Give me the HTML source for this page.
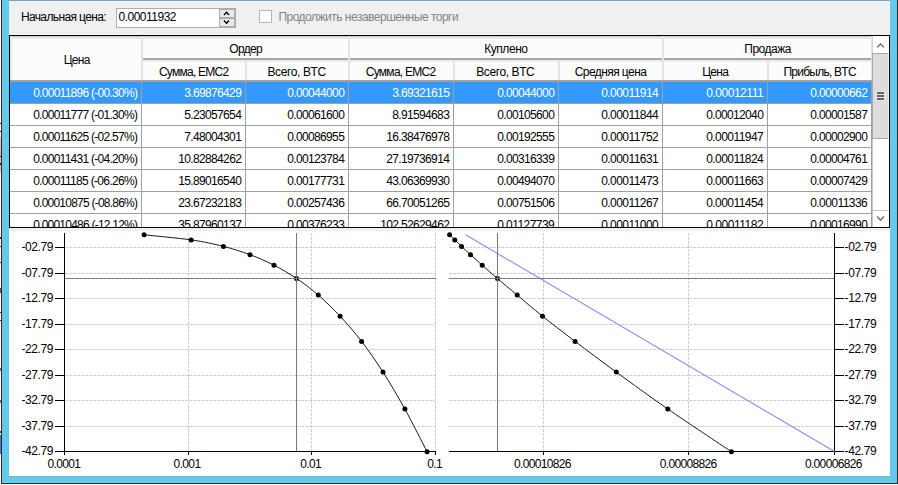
<!DOCTYPE html>
<html><head><meta charset="utf-8"><title>grid</title>
<style>
html,body{margin:0;padding:0;}
body{width:898px;height:485px;overflow:hidden;background:#fff;position:relative;font-family:"Liberation Sans",sans-serif;font-size:12px;color:#000;}
div,span{position:absolute;box-sizing:border-box;white-space:nowrap;}
.t{line-height:14px;height:14px;}
svg{position:absolute;left:0;top:0;}
svg text{font-family:"Liberation Sans",sans-serif;font-size:12px;fill:#000;}
</style></head><body>

<div style="left:0;top:0;width:898px;height:485px;background:#fbfbfb"></div>
<div style="left:1px;top:0;width:897px;height:484px;background:#2b2b2b"></div>
<div style="left:2px;top:0;width:895px;height:483px;background:#66c9e9"></div>
<div style="left:2px;top:482px;width:895px;height:1px;background:#6bd2f2"></div>
<div style="left:9px;top:476px;width:881px;height:1px;background:#62b8d8"></div>
<div style="left:0;top:137px;width:1px;height:35px;background:#e9bcbc"></div>
<div style="left:0;top:123px;width:1px;height:1px;background:#222"></div>
<div style="left:0;top:131px;width:1px;height:1px;background:#222"></div>
<div style="left:0;top:156px;width:1px;height:1px;background:#222"></div>
<div style="left:0;top:163px;width:1px;height:2px;background:#222"></div>
<div style="left:0;top:237px;width:1px;height:2px;background:#333"></div>
<div style="left:0;top:246px;width:1px;height:1px;background:#333"></div>
<div style="left:0;top:262px;width:1px;height:1px;background:#333"></div>
<div style="left:0;top:288px;width:1px;height:5px;background:#555"></div>
<div style="left:0;top:312px;width:1px;height:1px;background:#333"></div>
<div style="left:0;top:320px;width:1px;height:1px;background:#333"></div>
<div style="left:0;top:368px;width:1px;height:3px;background:#3a7bd5"></div>
<div style="left:0;top:400px;width:1px;height:3px;background:#3a7bd5"></div>
<div style="left:0;top:431px;width:1px;height:2px;background:#444"></div>
<div style="left:0;top:435px;width:1px;height:19px;background:#3a7bd5"></div>
<div style="left:9px;top:0;width:881px;height:1px;background:#72a5c5"></div>
<div style="left:9px;top:1px;width:881px;height:475px;background:#f0f0f0"></div>
<div style="left:9px;top:231px;width:881px;height:245px;background:#fff"></div>
<div style="left:116px;top:8px;width:120px;height:20px;background:#fff;border:1px solid #abadb3"></div>
<div style="left:219px;top:9px;width:16px;height:9px;background:#e9e9e9;border:1px solid #a9adb5"></div>
<div style="left:219px;top:18px;width:16px;height:9px;background:#e9e9e9;border:1px solid #a9adb5"></div>
<svg width="898" height="40" style="left:0;top:0"><path d="M224 15 L226.5 12.2 L229 15" fill="none" stroke="#000" stroke-width="1.3"/><path d="M224 20.5 L226.5 23.3 L229 20.5" fill="none" stroke="#000" stroke-width="1.3"/></svg>
<div style="left:259px;top:10px;width:13px;height:13px;background:#fff;border:1px solid #aeb6ba"></div>
<span class="t" style="left:20.90px;top:10px;letter-spacing:-0.616px;color:#000">Начальная цена:</span>
<span class="t" style="left:118.50px;top:10px;letter-spacing:-0.501px;color:#000">0.00011932</span>
<span class="t" style="left:278.40px;top:10px;letter-spacing:-0.497px;color:#838383">Продолжить незавершенные торги</span>
<div style="left:9px;top:35px;width:881px;height:193px;background:#000"></div>
<div style="left:10px;top:36px;width:879px;height:191px;background:#fff;overflow:hidden">
<div style="left:0;top:0;width:862px;height:46px;background:#fcfcfc"></div>
<div style="left:0;top:0;width:862px;height:3px;background:#e9e9e9"></div>
<div style="left:0;top:0;width:862px;height:1px;background:#c4c4c4"></div>
<div style="left:0;top:0;width:2px;height:45px;background:#e9e9e9"></div>
<div style="left:132px;top:22px;width:730px;height:2px;background:#a6a6a6"></div>
<div style="left:132px;top:24px;width:730px;height:2px;background:#ececec"></div>
<div style="left:131px;top:0px;width:2px;height:45px;background:#e4e4e4"></div>
<div style="left:235px;top:24px;width:2px;height:21px;background:#e4e4e4"></div>
<div style="left:338px;top:0px;width:2px;height:45px;background:#e4e4e4"></div>
<div style="left:443px;top:24px;width:2px;height:21px;background:#e4e4e4"></div>
<div style="left:548px;top:24px;width:2px;height:21px;background:#e4e4e4"></div>
<div style="left:652px;top:0px;width:2px;height:45px;background:#e4e4e4"></div>
<div style="left:757px;top:24px;width:2px;height:21px;background:#e4e4e4"></div>
<div style="left:861px;top:0px;width:2px;height:45px;background:#e4e4e4"></div>
<div style="left:0;top:44px;width:862px;height:2px;background:#a3a3a3"></div>
<div style="left:0;top:46px;width:861px;height:21px;background:#3399ff"></div>
<div style="left:0;top:67px;width:862px;height:1px;background:#a0a0a0"></div>
<div style="left:0;top:89px;width:862px;height:1px;background:#a0a0a0"></div>
<div style="left:0;top:111px;width:862px;height:1px;background:#a0a0a0"></div>
<div style="left:0;top:133px;width:862px;height:1px;background:#a0a0a0"></div>
<div style="left:0;top:155px;width:862px;height:1px;background:#a0a0a0"></div>
<div style="left:0;top:177px;width:862px;height:1px;background:#a0a0a0"></div>
<div style="left:0;top:199px;width:862px;height:1px;background:#a0a0a0"></div>
<div style="left:131px;top:46px;width:1px;height:145px;background:#a0a0a0"></div>
<div style="left:235px;top:46px;width:1px;height:145px;background:#a0a0a0"></div>
<div style="left:338px;top:46px;width:1px;height:145px;background:#a0a0a0"></div>
<div style="left:443px;top:46px;width:1px;height:145px;background:#a0a0a0"></div>
<div style="left:548px;top:46px;width:1px;height:145px;background:#a0a0a0"></div>
<div style="left:652px;top:46px;width:1px;height:145px;background:#a0a0a0"></div>
<div style="left:757px;top:46px;width:1px;height:145px;background:#a0a0a0"></div>
<div style="left:861px;top:46px;width:1px;height:145px;background:#a0a0a0"></div>
<span class="t" style="left:53.70px;top:17px;letter-spacing:-0.713px;color:#000">Цена</span>
<span class="t" style="left:219.30px;top:6px;letter-spacing:-0.696px;color:#000">Ордер</span>
<span class="t" style="left:474.20px;top:6px;letter-spacing:-0.438px;color:#000">Куплено</span>
<span class="t" style="left:734.30px;top:6px;letter-spacing:-0.498px;color:#000">Продажа</span>
<span class="t" style="left:148.90px;top:29px;letter-spacing:-0.738px;color:#000">Сумма, EMC2</span>
<span class="t" style="left:257.50px;top:29px;letter-spacing:-0.393px;color:#000">Всего, BTC</span>
<span class="t" style="left:355.80px;top:29px;letter-spacing:-0.738px;color:#000">Сумма, EMC2</span>
<span class="t" style="left:466.20px;top:29px;letter-spacing:-0.393px;color:#000">Всего, BTC</span>
<span class="t" style="left:564.70px;top:29px;letter-spacing:-0.568px;color:#000">Средняя цена</span>
<span class="t" style="left:692.20px;top:29px;letter-spacing:-0.713px;color:#000">Цена</span>
<span class="t" style="left:773.50px;top:29px;letter-spacing:-0.760px;color:#000">Прибыль, BTC</span>
<span class="t" style="left:23.20px;top:50px;letter-spacing:-0.726px;color:#fff">0.00011896 (-00.30%)</span>
<span class="t" style="left:174.20px;top:50px;letter-spacing:-0.640px;color:#fff">3.69876429</span>
<span class="t" style="left:277.20px;top:50px;letter-spacing:-0.640px;color:#fff">0.00044000</span>
<span class="t" style="left:382.20px;top:50px;letter-spacing:-0.640px;color:#fff">3.69321615</span>
<span class="t" style="left:487.20px;top:50px;letter-spacing:-0.640px;color:#fff">0.00044000</span>
<span class="t" style="left:591.20px;top:50px;letter-spacing:-0.551px;color:#fff">0.00011914</span>
<span class="t" style="left:696.20px;top:50px;letter-spacing:-0.462px;color:#fff">0.00012111</span>
<span class="t" style="left:800.20px;top:50px;letter-spacing:-0.640px;color:#fff">0.00000662</span>
<span class="t" style="left:23.20px;top:72px;letter-spacing:-0.726px;color:#000">0.00011777 (-01.30%)</span>
<span class="t" style="left:174.20px;top:72px;letter-spacing:-0.640px;color:#000">5.23057654</span>
<span class="t" style="left:277.20px;top:72px;letter-spacing:-0.640px;color:#000">0.00061600</span>
<span class="t" style="left:382.20px;top:72px;letter-spacing:-0.640px;color:#000">8.91594683</span>
<span class="t" style="left:487.20px;top:72px;letter-spacing:-0.640px;color:#000">0.00105600</span>
<span class="t" style="left:591.20px;top:72px;letter-spacing:-0.551px;color:#000">0.00011844</span>
<span class="t" style="left:696.20px;top:72px;letter-spacing:-0.640px;color:#000">0.00012040</span>
<span class="t" style="left:800.20px;top:72px;letter-spacing:-0.640px;color:#000">0.00001587</span>
<span class="t" style="left:23.20px;top:94px;letter-spacing:-0.726px;color:#000">0.00011625 (-02.57%)</span>
<span class="t" style="left:174.20px;top:94px;letter-spacing:-0.640px;color:#000">7.48004301</span>
<span class="t" style="left:277.20px;top:94px;letter-spacing:-0.640px;color:#000">0.00086955</span>
<span class="t" style="left:376.20px;top:94px;letter-spacing:-0.643px;color:#000">16.38476978</span>
<span class="t" style="left:487.20px;top:94px;letter-spacing:-0.640px;color:#000">0.00192555</span>
<span class="t" style="left:591.20px;top:94px;letter-spacing:-0.551px;color:#000">0.00011752</span>
<span class="t" style="left:696.20px;top:94px;letter-spacing:-0.551px;color:#000">0.00011947</span>
<span class="t" style="left:800.20px;top:94px;letter-spacing:-0.640px;color:#000">0.00002900</span>
<span class="t" style="left:23.20px;top:116px;letter-spacing:-0.726px;color:#000">0.00011431 (-04.20%)</span>
<span class="t" style="left:168.20px;top:116px;letter-spacing:-0.643px;color:#000">10.82884262</span>
<span class="t" style="left:277.20px;top:116px;letter-spacing:-0.640px;color:#000">0.00123784</span>
<span class="t" style="left:376.20px;top:116px;letter-spacing:-0.643px;color:#000">27.19736914</span>
<span class="t" style="left:487.20px;top:116px;letter-spacing:-0.640px;color:#000">0.00316339</span>
<span class="t" style="left:591.20px;top:116px;letter-spacing:-0.551px;color:#000">0.00011631</span>
<span class="t" style="left:696.20px;top:116px;letter-spacing:-0.551px;color:#000">0.00011824</span>
<span class="t" style="left:800.20px;top:116px;letter-spacing:-0.640px;color:#000">0.00004761</span>
<span class="t" style="left:23.20px;top:138px;letter-spacing:-0.682px;color:#000">0.00011185 (-06.26%)</span>
<span class="t" style="left:168.20px;top:138px;letter-spacing:-0.643px;color:#000">15.89016540</span>
<span class="t" style="left:277.20px;top:138px;letter-spacing:-0.640px;color:#000">0.00177731</span>
<span class="t" style="left:376.20px;top:138px;letter-spacing:-0.643px;color:#000">43.06369930</span>
<span class="t" style="left:487.20px;top:138px;letter-spacing:-0.640px;color:#000">0.00494070</span>
<span class="t" style="left:591.20px;top:138px;letter-spacing:-0.551px;color:#000">0.00011473</span>
<span class="t" style="left:696.20px;top:138px;letter-spacing:-0.551px;color:#000">0.00011663</span>
<span class="t" style="left:800.20px;top:138px;letter-spacing:-0.640px;color:#000">0.00007429</span>
<span class="t" style="left:23.20px;top:160px;letter-spacing:-0.771px;color:#000">0.00010875 (-08.86%)</span>
<span class="t" style="left:168.20px;top:160px;letter-spacing:-0.643px;color:#000">23.67232183</span>
<span class="t" style="left:277.20px;top:160px;letter-spacing:-0.640px;color:#000">0.00257436</span>
<span class="t" style="left:376.20px;top:160px;letter-spacing:-0.643px;color:#000">66.70051265</span>
<span class="t" style="left:487.20px;top:160px;letter-spacing:-0.640px;color:#000">0.00751506</span>
<span class="t" style="left:591.20px;top:160px;letter-spacing:-0.551px;color:#000">0.00011267</span>
<span class="t" style="left:696.20px;top:160px;letter-spacing:-0.551px;color:#000">0.00011454</span>
<span class="t" style="left:800.20px;top:160px;letter-spacing:-0.551px;color:#000">0.00011336</span>
<span class="t" style="left:23.20px;top:182px;letter-spacing:-0.771px;color:#000">0.00010486 (-12.12%)</span>
<span class="t" style="left:168.20px;top:182px;letter-spacing:-0.643px;color:#000">35.87960137</span>
<span class="t" style="left:277.20px;top:182px;letter-spacing:-0.640px;color:#000">0.00376233</span>
<span class="t" style="left:370.20px;top:182px;letter-spacing:-0.646px;color:#000">102.52629462</span>
<span class="t" style="left:487.20px;top:182px;letter-spacing:-0.551px;color:#000">0.01127739</span>
<span class="t" style="left:591.20px;top:182px;letter-spacing:-0.551px;color:#000">0.00011000</span>
<span class="t" style="left:696.20px;top:182px;letter-spacing:-0.462px;color:#000">0.00011182</span>
<span class="t" style="left:800.20px;top:182px;letter-spacing:-0.640px;color:#000">0.00016990</span>
<div style="left:862px;top:0;width:17px;height:191px;background:#fff;border-left:1px solid #c6c6c6"></div>
<div style="left:862px;top:0;width:1px;height:17px;background:#d2d2d2"></div>
<div style="left:862px;top:17px;width:17px;height:86px;background:#dcdcdc;border:1px solid #a9a9a9;border-right:1px solid #ececec"></div>
<div style="left:863px;top:174px;width:16px;height:1px;background:#c4c4c4"></div>
<svg width="17" height="191" style="left:862px;top:0"><path d="M5.2 11.4 L8.5 7.8 L11.8 11.4" fill="none" stroke="#5c5c5c" stroke-width="1.2"/><path d="M5.2 180.5 L8.5 184.3 L11.8 180.5" fill="none" stroke="#5c5c5c" stroke-width="1.2"/><rect x="4" y="55" width="9" height="10" fill="#e8e8e8"/><path d="M5 57H12M5 60H12M5 63H12" stroke="#606060" stroke-width="2"/></svg>
</div>
<svg width="898" height="485" viewBox="0 0 898 485">
<path d="M65 426.5H435" stroke="#cfcfcf" stroke-width="1" stroke-dasharray="3 1" fill="none" shape-rendering="crispEdges"/>
<path d="M449 426.5H834" stroke="#cfcfcf" stroke-width="1" stroke-dasharray="3 1" fill="none" shape-rendering="crispEdges"/>
<path d="M65 400.5H435" stroke="#cfcfcf" stroke-width="1" stroke-dasharray="3 1" fill="none" shape-rendering="crispEdges"/>
<path d="M449 400.5H834" stroke="#cfcfcf" stroke-width="1" stroke-dasharray="3 1" fill="none" shape-rendering="crispEdges"/>
<path d="M65 375.5H435" stroke="#cfcfcf" stroke-width="1" stroke-dasharray="3 1" fill="none" shape-rendering="crispEdges"/>
<path d="M449 375.5H834" stroke="#cfcfcf" stroke-width="1" stroke-dasharray="3 1" fill="none" shape-rendering="crispEdges"/>
<path d="M65 349.5H435" stroke="#cfcfcf" stroke-width="1" stroke-dasharray="3 1" fill="none" shape-rendering="crispEdges"/>
<path d="M449 349.5H834" stroke="#cfcfcf" stroke-width="1" stroke-dasharray="3 1" fill="none" shape-rendering="crispEdges"/>
<path d="M65 324.5H435" stroke="#cfcfcf" stroke-width="1" stroke-dasharray="3 1" fill="none" shape-rendering="crispEdges"/>
<path d="M449 324.5H834" stroke="#cfcfcf" stroke-width="1" stroke-dasharray="3 1" fill="none" shape-rendering="crispEdges"/>
<path d="M65 298.5H435" stroke="#cfcfcf" stroke-width="1" stroke-dasharray="3 1" fill="none" shape-rendering="crispEdges"/>
<path d="M449 298.5H834" stroke="#cfcfcf" stroke-width="1" stroke-dasharray="3 1" fill="none" shape-rendering="crispEdges"/>
<path d="M65 273.5H435" stroke="#cfcfcf" stroke-width="1" stroke-dasharray="3 1" fill="none" shape-rendering="crispEdges"/>
<path d="M449 273.5H834" stroke="#cfcfcf" stroke-width="1" stroke-dasharray="3 1" fill="none" shape-rendering="crispEdges"/>
<path d="M65 247.5H435" stroke="#cfcfcf" stroke-width="1" stroke-dasharray="3 1" fill="none" shape-rendering="crispEdges"/>
<path d="M449 247.5H834" stroke="#cfcfcf" stroke-width="1" stroke-dasharray="3 1" fill="none" shape-rendering="crispEdges"/>
<path d="M188.5 233V451" stroke="#cfcfcf" stroke-width="1" stroke-dasharray="3 1" fill="none" shape-rendering="crispEdges"/>
<path d="M311.5 233V451" stroke="#cfcfcf" stroke-width="1" stroke-dasharray="3 1" fill="none" shape-rendering="crispEdges"/>
<path d="M435.5 233V451" stroke="#cfcfcf" stroke-width="1" stroke-dasharray="3 1" fill="none" shape-rendering="crispEdges"/>
<path d="M543.5 233V451" stroke="#cfcfcf" stroke-width="1" stroke-dasharray="3 1" fill="none" shape-rendering="crispEdges"/>
<path d="M688.5 233V451" stroke="#cfcfcf" stroke-width="1" stroke-dasharray="3 1" fill="none" shape-rendering="crispEdges"/>
<path d="M64.5 233V455M64 451.5H436M188.5 452V455M311.5 452V455M435.5 452V455" stroke="#000" stroke-width="1" fill="none" shape-rendering="crispEdges"/>
<path d="M834.5 233V455M449 451.5H835M543.5 452V455M688.5 452V455" stroke="#000" stroke-width="1" fill="none" shape-rendering="crispEdges"/>
<path d="M55 451.5H64M835 451.5H844" stroke="#000" stroke-width="1" fill="none" shape-rendering="crispEdges"/>
<text x="21.5" y="455" textLength="32" lengthAdjust="spacing">-42.79</text>
<text x="844.6" y="455" textLength="32" lengthAdjust="spacing">-42.79</text>
<path d="M55 426.5H64M835 426.5H844" stroke="#000" stroke-width="1" fill="none" shape-rendering="crispEdges"/>
<text x="21.5" y="430" textLength="32" lengthAdjust="spacing">-37.79</text>
<text x="844.6" y="430" textLength="32" lengthAdjust="spacing">-37.79</text>
<path d="M55 400.5H64M835 400.5H844" stroke="#000" stroke-width="1" fill="none" shape-rendering="crispEdges"/>
<text x="21.5" y="404" textLength="32" lengthAdjust="spacing">-32.79</text>
<text x="844.6" y="404" textLength="32" lengthAdjust="spacing">-32.79</text>
<path d="M55 375.5H64M835 375.5H844" stroke="#000" stroke-width="1" fill="none" shape-rendering="crispEdges"/>
<text x="21.5" y="379" textLength="32" lengthAdjust="spacing">-27.79</text>
<text x="844.6" y="379" textLength="32" lengthAdjust="spacing">-27.79</text>
<path d="M55 349.5H64M835 349.5H844" stroke="#000" stroke-width="1" fill="none" shape-rendering="crispEdges"/>
<text x="21.5" y="353" textLength="32" lengthAdjust="spacing">-22.79</text>
<text x="844.6" y="353" textLength="32" lengthAdjust="spacing">-22.79</text>
<path d="M55 324.5H64M835 324.5H844" stroke="#000" stroke-width="1" fill="none" shape-rendering="crispEdges"/>
<text x="21.5" y="328" textLength="32" lengthAdjust="spacing">-17.79</text>
<text x="844.6" y="328" textLength="32" lengthAdjust="spacing">-17.79</text>
<path d="M55 298.5H64M835 298.5H844" stroke="#000" stroke-width="1" fill="none" shape-rendering="crispEdges"/>
<text x="21.5" y="302" textLength="32" lengthAdjust="spacing">-12.79</text>
<text x="844.6" y="302" textLength="32" lengthAdjust="spacing">-12.79</text>
<path d="M55 273.5H64M835 273.5H844" stroke="#000" stroke-width="1" fill="none" shape-rendering="crispEdges"/>
<text x="21.5" y="277" textLength="32" lengthAdjust="spacing">-07.79</text>
<text x="844.6" y="277" textLength="32" lengthAdjust="spacing">-07.79</text>
<path d="M55 247.5H64M835 247.5H844" stroke="#000" stroke-width="1" fill="none" shape-rendering="crispEdges"/>
<text x="21.5" y="251" textLength="32" lengthAdjust="spacing">-02.79</text>
<text x="844.6" y="251" textLength="32" lengthAdjust="spacing">-02.79</text>
<text x="47.5" y="468" textLength="33.5" lengthAdjust="spacing">0.0001</text>
<text x="173.6" y="468" textLength="27.5" lengthAdjust="spacing">0.001</text>
<text x="300.2" y="468" textLength="21.5" lengthAdjust="spacing">0.01</text>
<text x="427.2" y="468" textLength="15.5" lengthAdjust="spacing">0.1</text>
<text x="514.0" y="468" textLength="57.5" lengthAdjust="spacing">0.00010826</text>
<text x="659.8" y="468" textLength="57.5" lengthAdjust="spacing">0.00008826</text>
<text x="804.9" y="468" textLength="57.5" lengthAdjust="spacing">0.00006826</text>
<path d="M465.6 234.8L834.5 451.5" stroke="#8a8af6" stroke-width="1.1" fill="none"/>
<path d="M144.1 234.8 C151.9 235.7 177.9 238.0 191.1 239.9 C204.3 241.8 213.5 243.9 223.4 246.4 C233.2 248.8 241.6 251.6 250.0 254.7 C258.5 257.8 266.2 261.2 274.0 265.2 C281.7 269.2 289.1 273.5 296.5 278.5 C303.9 283.4 311.0 288.8 318.3 295.1 C325.6 301.4 332.9 308.5 340.1 316.2 C347.3 323.9 354.5 332.1 361.6 341.4 C368.8 350.7 375.8 360.8 383.0 372.1 C390.2 383.4 397.5 395.7 404.9 409.0 C412.2 422.3 423.4 444.6 427.1 451.7" stroke="#1a1a1a" stroke-width="1" fill="none"/>
<path d="M449.6 234.8 C450.5 235.7 452.8 238.0 454.8 239.9 C456.8 241.8 458.9 243.9 461.5 246.4 C464.2 248.8 467.1 251.6 470.5 254.7 C473.9 257.8 477.7 261.2 482.2 265.2 C486.7 269.2 491.6 273.5 497.4 278.5 C503.2 283.4 509.7 288.8 517.2 295.1 C524.7 301.4 532.9 308.5 542.5 316.2 C552.1 323.9 562.8 332.1 575.1 341.4 C587.4 350.7 600.8 360.8 616.3 372.1 C631.8 383.4 648.6 395.7 667.8 409.0 C687.0 422.3 720.8 444.6 731.4 451.7" stroke="#1a1a1a" stroke-width="1" fill="none"/>
<circle cx="144.1" cy="234.8" r="2.5" fill="#000"/>
<circle cx="191.1" cy="239.9" r="2.5" fill="#000"/>
<circle cx="223.4" cy="246.4" r="2.5" fill="#000"/>
<circle cx="250.0" cy="254.7" r="2.5" fill="#000"/>
<circle cx="274.0" cy="265.2" r="2.5" fill="#000"/>
<circle cx="296.5" cy="278.5" r="2.5" fill="#000"/>
<circle cx="318.3" cy="295.1" r="2.5" fill="#000"/>
<circle cx="340.1" cy="316.2" r="2.5" fill="#000"/>
<circle cx="361.6" cy="341.4" r="2.5" fill="#000"/>
<circle cx="383.0" cy="372.1" r="2.5" fill="#000"/>
<circle cx="404.9" cy="409.0" r="2.5" fill="#000"/>
<circle cx="427.1" cy="451.7" r="2.5" fill="#000"/>
<circle cx="449.6" cy="234.8" r="2.5" fill="#000"/>
<circle cx="454.8" cy="239.9" r="2.5" fill="#000"/>
<circle cx="461.5" cy="246.4" r="2.5" fill="#000"/>
<circle cx="470.5" cy="254.7" r="2.5" fill="#000"/>
<circle cx="482.2" cy="265.2" r="2.5" fill="#000"/>
<circle cx="497.4" cy="278.5" r="2.5" fill="#000"/>
<circle cx="517.2" cy="295.1" r="2.5" fill="#000"/>
<circle cx="542.5" cy="316.2" r="2.5" fill="#000"/>
<circle cx="575.1" cy="341.4" r="2.5" fill="#000"/>
<circle cx="616.3" cy="372.1" r="2.5" fill="#000"/>
<circle cx="667.8" cy="409.0" r="2.5" fill="#000"/>
<circle cx="731.4" cy="451.7" r="2.5" fill="#000"/>
<path d="M65 278.5H436M296.5 233V451" stroke="#787878" stroke-width="1" fill="none" shape-rendering="crispEdges"/>
<path d="M449 278.5H834M497.5 233V451" stroke="#787878" stroke-width="1" fill="none" shape-rendering="crispEdges"/>
</svg>
</body></html>
